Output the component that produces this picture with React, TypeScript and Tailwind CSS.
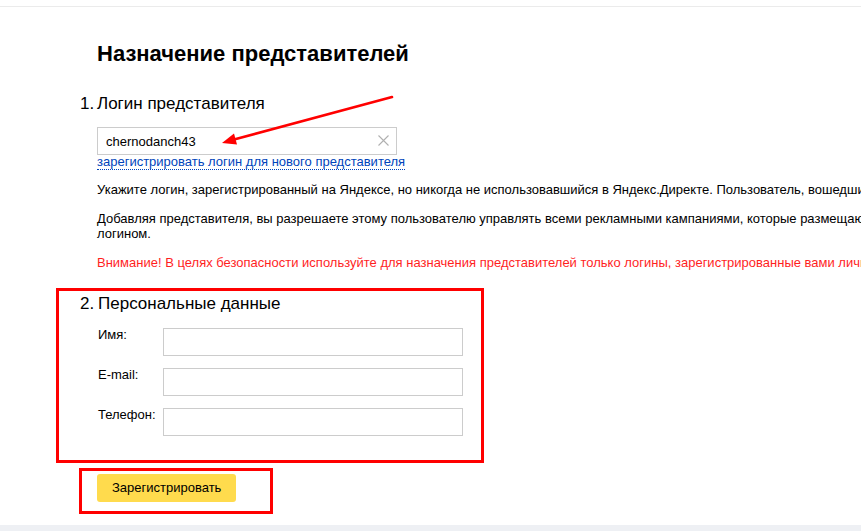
import { useState } from "react";

function TextField({ className = "" }: { className?: string }) {
  return (
    <input
      type="text"
      className={`h-[28px] w-[300px] border border-[#cccccc] bg-white px-2 text-[13px] outline-none ${className}`}
    />
  );
}

export default function App() {
  const [login, setLogin] = useState("chernodanch43");
  const fields = ["Имя:", "E-mail:", "Телефон:"];

  return (
    <div className="relative flex h-[531px] w-[861px] flex-col overflow-hidden bg-white font-['Liberation_Sans',Arial,sans-serif] text-black">
      <div className="h-[7px] shrink-0 border-b border-[#ebebeb]" />

      <div className="flex-1 pl-[97px] pt-[33px]">
        <h1 className="text-[22px] font-bold leading-[27px]">Назначение представителей</h1>

        <div className="mt-[26px] flex text-[17px] leading-[22px]">
          <span className="-ml-[17px] w-[17px]">1.</span>
          <span>Логин представителя</span>
        </div>

        <div className="relative mt-[12px] h-[28px] w-[300px]">
          <input
            value={login}
            onChange={(e) => setLogin(e.target.value)}
            className="h-full w-full border border-[#cccccc] pl-[8px] pr-7 text-[13px] outline-none"
          />
          <button className="absolute right-[8px] top-[8px] text-[#b0b0b0]">
            <svg width="11" height="11" viewBox="0 0 11 11">
              <path d="M0.5 0.5L10.5 10.5M10.5 0.5L0.5 10.5" stroke="currentColor" strokeWidth="1.1" />
            </svg>
          </button>
        </div>

        <a
          href="#"
          className="block w-fit border-b border-dotted border-[#0044bb] text-[13px] leading-[14px] text-[#0044bb]"
        >
          зарегистрировать логин для нового представителя
        </a>

        <div className="mt-[12px] text-[13px] leading-[15px]">
          <p className="whitespace-nowrap">
            Укажите логин, зарегистрированный на Яндексе, но никогда не использовавшийся в Яндекс.Директе. Пользователь, вошедший под этим логином, сможет работать с вашими кампаниями.
          </p>
          <p className="mt-[14px] w-[870px]">
            Добавляя представителя, вы разрешаете этому пользователю управлять всеми рекламными кампаниями, которые размещаются под вашим логином.
          </p>
          <p className="mt-[14px] whitespace-nowrap text-[#ff1f1f]">
            Внимание! В целях безопасности используйте для назначения представителей только логины, зарегистрированные вами лично.
          </p>
        </div>
      </div>

      <div className="absolute left-0 top-[288px] w-full">
        <div className="ml-[56px] h-[175px] w-[428px] border-[3px] border-[#ff0000] pl-[21px] pt-[2px]">
          <div className="flex text-[17px] leading-[22px]">
            <span className="w-[18px]">2.</span>
            <span>Персональные данные</span>
          </div>
          <div className="mt-[13px] flex flex-col gap-[12px] pl-[18px]">
            {fields.map((label) => (
              <div key={label} className="flex">
                <span className="w-[65px] text-[13px] leading-[14px]">{label}</span>
                <TextField />
              </div>
            ))}
          </div>
        </div>

        <div className="ml-[79px] mt-[5px] h-[46px] w-[194px] border-[3px] border-[#ff0000] pl-[15px] pt-[3px]">
          <button className="h-[28px] rounded-[3px] bg-[#ffdb4d] px-[15px] text-[13px] text-black">
            Зарегистрировать
          </button>
        </div>
      </div>

      <div className="h-[6px] shrink-0 bg-[#eef0f4]" />

      <svg className="pointer-events-none absolute left-0 top-0" width="861" height="531">
        <line x1="392" y1="97" x2="234" y2="139.5" stroke="#ff0000" strokeWidth="2.6" strokeLinecap="round" />
        <polygon points="222,143 237,144.6 234,133.5" fill="#ff0000" />
      </svg>
    </div>
  );
}
